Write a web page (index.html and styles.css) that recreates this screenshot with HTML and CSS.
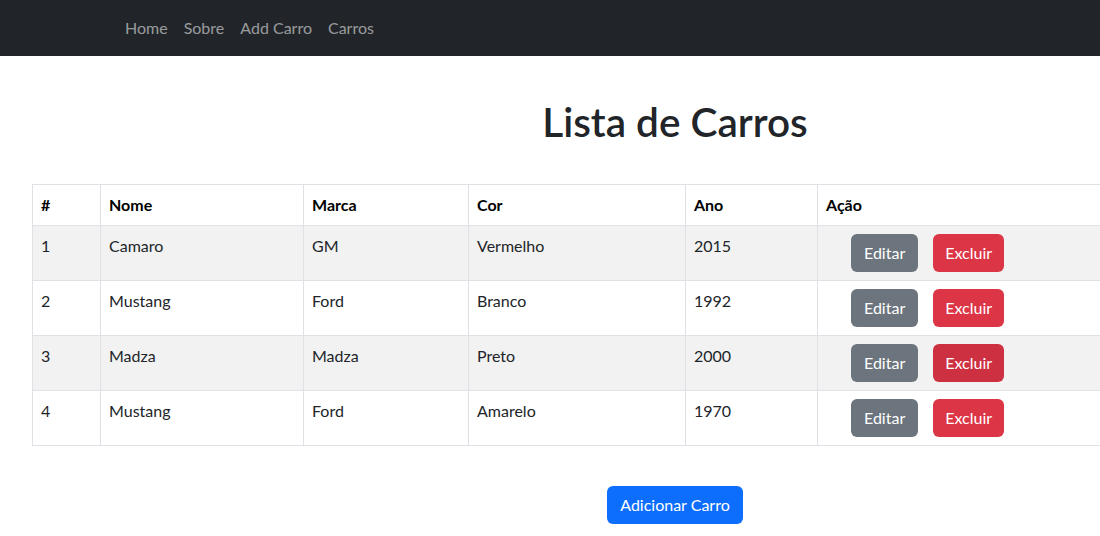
FILE: index.html
```html
<!DOCTYPE html>
<html lang="pt-BR">
<head>
<meta charset="utf-8">
<title>Lista de Carros</title>
<link rel="stylesheet" href="styles.css">
</head>
<body>
<nav class="navbar">
  <ul class="nav-list">
    <li><a class="nav-link" href="#">Home</a></li>
    <li><a class="nav-link" href="#">Sobre</a></li>
    <li><a class="nav-link" href="#">Add Carro</a></li>
    <li><a class="nav-link" href="#">Carros</a></li>
  </ul>
</nav>
<main class="container">
  <h1 class="title">Lista de Carros</h1>
  <table class="table">
    <colgroup>
      <col class="c-id"><col class="c-nome"><col class="c-marca"><col class="c-cor"><col class="c-ano"><col class="c-acao">
    </colgroup>
    <thead>
      <tr><th>#</th><th>Nome</th><th>Marca</th><th>Cor</th><th>Ano</th><th>Ação</th></tr>
    </thead>
    <tbody>
      <tr class="striped"><td>1</td><td>Camaro</td><td>GM</td><td>Vermelho</td><td>2015</td><td><button class="btn btn-edit">Editar</button><button class="btn btn-del">Excluir</button></td></tr>
      <tr><td>2</td><td>Mustang</td><td>Ford</td><td>Branco</td><td>1992</td><td><button class="btn btn-edit">Editar</button><button class="btn btn-del">Excluir</button></td></tr>
      <tr class="striped"><td>3</td><td>Madza</td><td>Madza</td><td>Preto</td><td>2000</td><td><button class="btn btn-edit">Editar</button><button class="btn btn-del btn-del-hover">Excluir</button></td></tr>
      <tr><td>4</td><td>Mustang</td><td>Ford</td><td>Amarelo</td><td>1970</td><td><button class="btn btn-edit">Editar</button><button class="btn btn-del">Excluir</button></td></tr>
    </tbody>
  </table>
  <div class="actions">
    <button class="btn btn-primary">Adicionar Carro</button>
  </div>
</main>
</body>
</html>
```
FILE: styles.css
```css
html, body {
  margin: 0;
  overflow: hidden;
}
body {
  font-family: "Lato", "Liberation Sans", sans-serif;
  font-size: 16px;
  line-height: 1.5;
  color: #212529;
  background: #fff;
}
.navbar {
  height: 56px;
  background: #212529;
  display: flex;
  align-items: center;
  padding-left: 117px;
  box-sizing: border-box;
}
.nav-list {
  list-style: none;
  margin: 0;
  padding: 0;
  display: flex;
}
.nav-link {
  display: block;
  padding: 8px;
  color: rgba(255, 255, 255, 0.55);
  text-decoration: none;
  line-height: 24px;
}
.container {
  margin-left: 32px;
  width: 1286px;
}
.title {
  margin: 42px 0 38px;
  font-size: 40.5px;
  font-weight: 600;
  line-height: 48px;
  text-align: center;
  color: #212529;
}
.table {
  border-collapse: collapse;
  table-layout: fixed;
  width: 1286px;
}
.c-id { width: 68px; }
.c-nome { width: 203px; }
.c-marca { width: 165px; }
.c-cor { width: 217px; }
.c-ano { width: 132px; }
.table th, .table td {
  border: 1px solid #dee2e6;
  padding: 8px;
  text-align: left;
  vertical-align: top;
  line-height: 24px;
}
.table th {
  font-weight: 700;
  color: #000;
}
.striped td {
  background: #f2f2f2;
}
.btn {
  font-family: inherit;
  font-size: 16px;
  line-height: 24px;
  padding: 6px 12px;
  border: 1px solid transparent;
  border-radius: 6px;
  color: #fff;
  cursor: pointer;
  vertical-align: top;
}
.btn-edit {
  background: #6c757d;
  margin-left: 25px;
}
.btn-del {
  background: #dc3545;
  margin-left: 15px;
  padding: 6px 11px;
}
.btn-del-hover {
  background: #cd3040;
}
.actions {
  margin-top: 40px;
  text-align: center;
}
.btn-primary {
  background: #0d6efd;
}
```
